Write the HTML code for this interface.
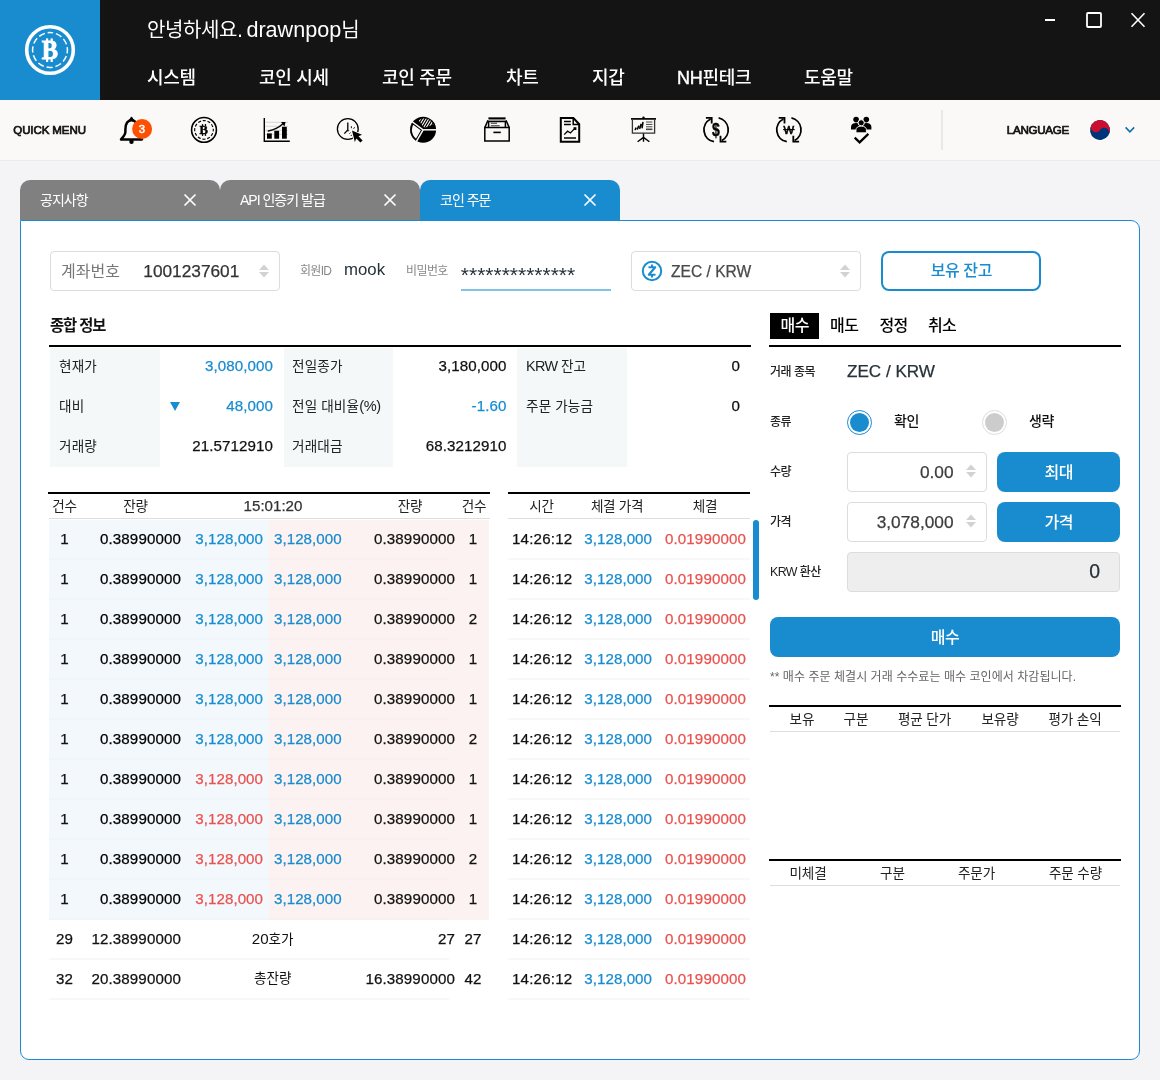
<!DOCTYPE html>
<html lang="ko">
<head>
<meta charset="utf-8">
<title>코인 주문</title>
<style>
*{box-sizing:border-box;margin:0;padding:0}
html,body{width:1160px;height:1080px;overflow:hidden}
body{background:#f4f4f7;font-family:"Liberation Sans","Noto Sans CJK KR",sans-serif;font-size:14px;color:#111;position:relative}
#app{position:absolute;left:0;top:0;width:1160px;height:1080px;will-change:transform}
.b{position:absolute}
.t{position:absolute;white-space:nowrap}
svg{position:absolute;overflow:visible}
#hdr{left:0;top:0;width:1160px;height:100px;background:#141414}
#logo{left:0;top:0;width:100px;height:100px;background:#198ccf}
#quick{left:0;top:100px;width:1160px;height:61px;background:#faf9f8;border-bottom:1px solid #ebebee}
.tab{position:absolute;top:180px;width:200px;height:40px;background:#808080;border-radius:10px 10px 0 0}
.tab.on{background:#198ccf}
#panel{left:20px;top:220px;width:1120px;height:840px;background:#fff;border:1px solid #198ccf;border-radius:0 9px 9px 9px}
.box{position:absolute;border:1px solid #dcdcdc;border-radius:4px;background:#fff}
.btn{position:absolute;background:#198ccf;border-radius:8px}
</style>
</head>
<body>
<div id="app">

<div class="b" id="hdr"></div><div class="b" id="logo"></div>
<svg style="left:0;top:0" width="100" height="100" viewBox="0 0 100 100"><circle cx="50" cy="50" r="23.3" fill="none" stroke="#fff" stroke-width="3.6"/><circle cx="50" cy="50" r="17.4" fill="none" stroke="#fff" stroke-width="1.5" stroke-dasharray="6.3 2.81" stroke-dashoffset="3.1" transform="rotate(-90 50 50)"/><g fill="#fff"><rect x="46" y="38.4" width="2.2" height="4"/><rect x="50.6" y="38.4" width="2.2" height="4"/><rect x="46" y="58" width="2.2" height="4"/><rect x="50.6" y="58" width="2.2" height="4"/></g><text x="49.8" y="59" text-anchor="middle" font-family="'Liberation Serif',serif" font-weight="700" font-size="26.5" fill="#fff" stroke="#fff" stroke-width="0.9" transform="translate(49.8 0) scale(0.92 1) translate(-49.8 0)">B</text></svg>
<div class="t" style="left:147px;top:17.2px;font-size:21.6px;line-height:26px;color:#fff"><span style="font-size:20px;letter-spacing:-0.4px">안녕하세요</span><span style="letter-spacing:-1.3px">. </span>drawnpop<span style="font-size:20px">님</span></div>
<div class="t" style="top:66px;font-size:18px;line-height:24px;color:#fff;font-weight:500;letter-spacing:-0.3px;left:147px;">시스템</div>
<div class="t" style="top:66px;font-size:18px;line-height:24px;color:#fff;font-weight:500;letter-spacing:-0.3px;left:259px;">코인 시세</div>
<div class="t" style="top:66px;font-size:18px;line-height:24px;color:#fff;font-weight:500;letter-spacing:-0.3px;left:382px;">코인 주문</div>
<div class="t" style="top:66px;font-size:18px;line-height:24px;color:#fff;font-weight:500;letter-spacing:-0.3px;left:506px;">차트</div>
<div class="t" style="top:66px;font-size:18px;line-height:24px;color:#fff;font-weight:500;letter-spacing:-0.3px;left:592px;">지갑</div>
<div class="t" style="top:66px;left:677px;font-size:18px;line-height:24px;color:#fff;font-weight:500;letter-spacing:-0.3px"><span style="-webkit-text-stroke:0.45px">NH</span>핀테크</div>
<div class="t" style="top:66px;font-size:18px;line-height:24px;color:#fff;font-weight:500;letter-spacing:-0.3px;left:804px;">도움말</div>
<svg style="left:1040px;top:10px" width="110" height="22" viewBox="0 0 110 22"><path d="M5 10H15" stroke="#fff" stroke-width="2" fill="none"/><rect x="47" y="3" width="14" height="14" rx="1" stroke="#fff" stroke-width="1.8" fill="none"/><path d="M91.5 3.3L104.5 16.7M104.5 3.3L91.5 16.7" stroke="#fff" stroke-width="1.6" fill="none"/></svg>
<div class="b" id="quick"></div>
<div class="t" style="top:121.3px;font-size:11.52px;line-height:18px;color:#111;letter-spacing:-0.1px;left:13.3px;-webkit-text-stroke:0.25px;-webkit-text-stroke:0.7px;">QUICK MENU</div>
<svg style="left:0;top:100px" width="1160" height="60" viewBox="0 100 1160 60"><g fill="none" stroke="#000" stroke-width="2.5" stroke-linejoin="round" stroke-linecap="round"><path d="M125.4 129.5C125.4 123.4 127.8 120.2 131.5 120.2C135.2 120.2 137.6 123.4 137.6 129.5V131.5C137.6 135 139.6 136.8 142 139.4H121C123.4 136.8 125.4 135 125.4 131.5Z"/></g><path d="M129.4 120L131.5 116.9L133.6 120Z" fill="#000" stroke="#000" stroke-width="1" stroke-linejoin="round"/><circle cx="131.5" cy="141.8" r="2.2" fill="#000"/><circle cx="142.1" cy="129" r="10" fill="#ff4f00"/><text x="142" y="133" text-anchor="middle" font-family="'Liberation Sans',sans-serif" font-weight="400" font-size="11.4" fill="#fff" stroke="#fff" stroke-width="0.45">3</text><circle cx="204" cy="129.9" r="12.4" fill="none" stroke="#000" stroke-width="1.6"/><circle cx="204" cy="129.9" r="9.3" fill="none" stroke="#000" stroke-width="1.15" stroke-dasharray="3.1 1.769" stroke-dashoffset="1.55"/><g fill="#000"><rect x="201.9" y="124.1" width="1.3" height="2"/><rect x="204.8" y="124.1" width="1.3" height="2"/><rect x="201.9" y="134" width="1.3" height="1.9"/><rect x="204.8" y="134" width="1.3" height="1.9"/></g><text x="0" y="0" text-anchor="middle" font-family="'Liberation Serif',serif" font-weight="700" font-size="12.4" fill="#000" stroke="#000" stroke-width="0.4" transform="translate(203.8 134.3) scale(1.02 1)">B</text><path d="M265 122.3H288M265 126.3H288M265 130.3H288M265 134.3H288" stroke="#c8c8c8" stroke-width="0.7" fill="none"/><path d="M264.3 118V141.2H289.8" stroke="#000" stroke-width="1.4" fill="none"/><g fill="#000"><rect x="267" y="133.4" width="4.8" height="5.3"/><rect x="274.3" y="130.8" width="4.8" height="7.9"/><rect x="282" y="126.8" width="4.8" height="11.9"/></g><path d="M268.3 131C274.5 129.8 279 127.6 283.2 123.6" stroke="#000" stroke-width="1.4" fill="none" stroke-linecap="round"/><path d="M281 122.1L285.6 122.1L284.4 126.4Z" fill="#000"/><circle cx="347.8" cy="129" r="10.4" fill="none" stroke="#000" stroke-width="1.3"/><path d="M347.8 122.6V130L344.3 133.6" stroke="#000" stroke-width="1.3" fill="none"/><path d="M352 130.6L362 134.8L358.5 136.3L362.6 140.4L360.4 142.6L356.3 138.5L354.8 142Z" fill="#faf9f8" stroke="#faf9f8" stroke-width="2" stroke-linejoin="round"/><path d="M352 130.6L362 134.8L358.5 136.3L362.6 140.4L360.4 142.6L356.3 138.5L354.8 142Z" fill="#000"/><path d="M351.4 126.2V128.2M354.6 127.2L353.6 128.8M349.2 130.6L347.6 131M349.4 133.6L350.6 132.6M351 136L351.6 134.8" stroke="#000" stroke-width="0.9" fill="none"/><circle cx="423.1" cy="129.8" r="13" fill="#000"/><clipPath id="cpl"><path d="M423.10 129.80L416.68 141.10A13 13 0 0 1 412.62 122.10Z"/></clipPath><path d="M423.10 129.80L416.68 141.10A13 13 0 0 1 412.62 122.10Z" fill="#faf9f8" stroke="#000" stroke-width="3.6" clip-path="url(#cpl)" stroke-linejoin="miter"/><clipPath id="cpt"><path d="M423.10 129.80L417.23 122.20A9.6 9.6 0 0 1 432.00 126.20Z" transform="translate(1.3 -1.8)"/></clipPath><path d="M412.9 113.80000000000001L400.9 133.8M415.6 113.80000000000001L403.6 133.8M418.3 113.80000000000001L406.3 133.8M421.0 113.80000000000001L409.0 133.8M423.7 113.80000000000001L411.7 133.8M426.4 113.80000000000001L414.4 133.8M429.1 113.80000000000001L417.1 133.8M431.8 113.80000000000001L419.8 133.8M434.5 113.80000000000001L422.5 133.8M437.2 113.80000000000001L425.2 133.8M439.9 113.80000000000001L427.9 133.8M442.6 113.80000000000001L430.6 133.8M445.3 113.80000000000001L433.3 133.8M448.0 113.80000000000001L436.0 133.8" stroke="#faf9f8" stroke-width="1.1" fill="none" clip-path="url(#cpt)"/><path d="M423.1 129.8L411.82 121.51" stroke="#faf9f8" stroke-width="1.5"/><path d="M423.1 129.8L437.10 129.80" stroke="#faf9f8" stroke-width="1.5"/><path d="M423.1 129.8L416.18 141.97" stroke="#faf9f8" stroke-width="1.5"/><g fill="none" stroke="#000" stroke-width="1.5" stroke-linejoin="miter"><path d="M484.8 127.6H509.2V141H484.8Z"/><path d="M484.8 127.6L488 120.2M509.2 127.6L506 120.2"/><path d="M488.6 127V121.6H505.4V127"/><path d="M493.4 132.4H500.8" stroke-width="1.6"/></g><path d="M488.4 118.2H505.6" stroke="#000" stroke-width="1.7" fill="none"/><path d="M488.6 119.8H505.4" stroke="#666" stroke-width="1.2" fill="none"/><path d="M490.8 123.3H497M490.8 125.7H499.6" stroke="#333" stroke-width="1.1" fill="none"/><path d="M560.8 118H573.4L579.2 124.2V141.7H560.8Z" fill="none" stroke="#000" stroke-width="2" stroke-linejoin="miter"/><path d="M573.2 118.4V124.4H579" fill="none" stroke="#000" stroke-width="1.5"/><path d="M564 121.4H570.8M564 124.6H570.8" stroke="#000" stroke-width="1.5" fill="none"/><path d="M564.2 134.6L567.6 131.2L570.4 133L574.6 128.6" stroke="#000" stroke-width="1.3" fill="none"/><rect x="573.6" y="127.2" width="2.8" height="2.8" fill="#000"/><path d="M564 138H576" stroke="#000" stroke-width="1.5" fill="none"/><path d="M631 118.9H656" stroke="#000" stroke-width="1.7" fill="none"/><circle cx="643.5" cy="117.8" r="1.2" fill="#000"/><path d="M632.4 119.6V133.2H654.6V119.6" stroke="#333" stroke-width="1.3" fill="none"/><path d="M635.3 129.5L635.9 128.2M637.5 129L638.6 126.3M639.8 128.3L641 124.4M642.1 127.6L642.9 122.6" stroke="#000" stroke-width="1.6" stroke-linecap="round" fill="none"/><path d="M646 122H652.4M646 124.4H652.4M646 126.8H652.4" stroke="#444" stroke-width="1" fill="none"/><path d="M646 129.3H652.4" stroke="#444" stroke-width="1.6" fill="none"/><path d="M643.5 133.4V141.8M643.5 137.4L637.6 141.8M643.5 137.4L649.4 141.8" stroke="#000" stroke-width="1.4" fill="none"/><path d="M714.00 141.72A12.1 12.1 0 0 1 710.61 119.02" stroke="#000" stroke-width="1.8" fill="none"/><path d="M705.90 117.8H711.70V123.6" stroke="#000" stroke-width="1.8" fill="none"/><path d="M718.62 117.96A12.1 12.1 0 0 1 721.78 140.48" stroke="#000" stroke-width="1.8" fill="none"/><path d="M726.30 141.6H720.50V135.8" stroke="#000" stroke-width="1.8" fill="none"/><text x="0" y="0" text-anchor="middle" font-family="'Liberation Sans',sans-serif" font-weight="700" font-size="17.5" fill="#000" stroke="#000" stroke-width="0.4" transform="translate(715.8 136.2) scale(0.8 1)">$</text><path d="M786.80 141.72A12.1 12.1 0 0 1 783.41 119.02" stroke="#000" stroke-width="1.8" fill="none"/><path d="M778.70 117.8H784.50V123.6" stroke="#000" stroke-width="1.8" fill="none"/><path d="M791.42 117.96A12.1 12.1 0 0 1 794.58 140.48" stroke="#000" stroke-width="1.8" fill="none"/><path d="M799.10 141.6H793.30V135.8" stroke="#000" stroke-width="1.8" fill="none"/><text x="788.7" y="134" text-anchor="middle" font-family="'Liberation Sans',sans-serif" font-weight="400" font-size="11.2" fill="#000" stroke="#000" stroke-width="0.6">W</text><path d="M783.1 129.6H794.7" stroke="#000" stroke-width="1.1" fill="none"/><g fill="#000"><circle cx="856.1" cy="119.6" r="2.8"/><circle cx="866.3" cy="119.6" r="2.8"/><path d="M851 129.6V126.8C851 124.4 853 123 856.1 123C859.2 123 861.2 124.4 861.2 126.8V129.6Z"/><path d="M861.2 129.6V126.8C861.2 124.4 863.2 123 866.3 123C869.4 123 871.4 124.4 871.4 126.8V129.6Z"/></g><circle cx="861.2" cy="122.8" r="3.1" fill="#000" stroke="#faf9f8" stroke-width="1"/><path d="M856 132.8V129.8C856 127.4 858 126.2 861.2 126.2C864.4 126.2 866.4 127.4 866.4 129.8V132.8Z" fill="#000" stroke="#faf9f8" stroke-width="0.9"/><path d="M854.7 137.7L859.6 142.3L868.4 133.9" stroke="#000" stroke-width="2.3" fill="none"/><circle cx="1100" cy="130" r="10.9" fill="#fff"/><g transform="rotate(33.7 1100 130)"><circle cx="1100" cy="130" r="10" fill="#003478"/><path d="M1090 130A10 10 0 0 1 1110 130A5.0 5.0 0 0 0 1100 130A5.0 5.0 0 0 1 1090 130Z" fill="#cb0d2f"/></g><path d="M1125.6 127.4L1129.9 131.8L1134.2 127.4" stroke="#1272ad" stroke-width="1.6" fill="none"/></svg>
<div class="b" style="left:941px;top:110px;width:1.5px;height:40px;background:#e8e8eb;"></div>
<div class="t" style="top:121.3px;font-size:11.64px;line-height:18px;color:#111;letter-spacing:-0.3px;left:1006.8px;-webkit-text-stroke:0.25px;-webkit-text-stroke:0.7px;">LANGUAGE</div>
<div class="tab" style="left:20px"></div>
<div class="t" style="top:189.7px;font-size:14px;line-height:20px;color:#fff;letter-spacing:-1px;left:40px;">공지사항</div>
<div class="b" style="left:183px;top:193px;width:14px;height:14px"><svg width="14" height="14" viewBox="0 0 14 14"><path d="M1.5 1.5L12.5 12.5M12.5 1.5L1.5 12.5" stroke="#fff" stroke-width="1.7" fill="none"/></svg></div>
<div class="tab" style="left:220px"></div>
<div class="t" style="top:189.7px;font-size:14px;line-height:20px;color:#fff;letter-spacing:-1px;left:240px;">API <span style="font-size:14px;">인증키 발급</span></div>
<div class="b" style="left:383px;top:193px;width:14px;height:14px"><svg width="14" height="14" viewBox="0 0 14 14"><path d="M1.5 1.5L12.5 12.5M12.5 1.5L1.5 12.5" stroke="#fff" stroke-width="1.7" fill="none"/></svg></div>
<div class="tab on" style="left:420px"></div>
<div class="t" style="top:189.7px;font-size:14px;line-height:20px;color:#fff;letter-spacing:-1px;left:440px;">코인 주문</div>
<div class="b" style="left:583px;top:193px;width:14px;height:14px"><svg width="14" height="14" viewBox="0 0 14 14"><path d="M1.5 1.5L12.5 12.5M12.5 1.5L1.5 12.5" stroke="#fff" stroke-width="1.7" fill="none"/></svg></div>
<div class="b" id="panel"></div>
<div class="box" style="left:50px;top:251px;width:230px;height:40px"></div>
<div class="t" style="top:261px;font-size:16px;line-height:22px;color:#777;left:61px;">계좌번호</div>
<div class="t" style="top:259.9px;font-size:17.28px;line-height:22px;color:#333;left:143.3px;-webkit-text-stroke:0.25px;">1001237601</div>
<svg style="left:258px;top:264.3px" width="12" height="14" viewBox="0 0 12 14"><path d="M6 0.5L11 6H1Z M6 13.5L1 8H11Z" fill="#d2d2d2"/></svg>
<div class="t" style="top:261.5px;font-size:12px;line-height:18px;color:#888;letter-spacing:-0.7px;left:300px;"><span style="font-size:12px;">회원</span>ID</div>
<div class="t" style="top:258.5px;font-size:16.8px;line-height:22px;color:#263238;left:344px;-webkit-text-stroke:0.25px;-webkit-text-stroke:0;">mook</div>
<div class="t" style="top:261.5px;font-size:12px;line-height:18px;color:#888;letter-spacing:-0.6px;left:406px;">비밀번호</div>
<div class="t" style="top:260.2px;font-size:21px;line-height:30px;color:#263238;left:460.8px;">**************</div>
<div class="b" style="left:460.5px;top:289px;width:150.5px;height:2px;background:#7fc3e9;"></div>
<div class="box" style="left:631px;top:251px;width:230px;height:40px"></div>
<svg style="left:641px;top:260px" width="22" height="22" viewBox="0 0 22 22"><circle cx="11" cy="11" r="9.2" stroke="#198ccf" stroke-width="2" fill="none"/><path d="M7.5 7.2H14.2L7.8 14.8H14.5M11 4.6V7.2M11 14.8V17.4" stroke="#198ccf" stroke-width="2.1" fill="none" stroke-linejoin="round"/></svg>
<div class="t" style="top:261.2px;font-size:15.6px;line-height:22px;color:#4a4a4a;left:671px;-webkit-text-stroke:0.25px;">ZEC / KRW</div>
<svg style="left:839px;top:264.3px" width="12" height="14" viewBox="0 0 12 14"><path d="M6 0.5L11 6H1Z M6 13.5L1 8H11Z" fill="#d2d2d2"/></svg>
<div class="b" style="left:881px;top:251px;width:160px;height:40px;border:2px solid #198ccf;border-radius:8px;background:#fff"></div>
<div class="t" style="top:260.3px;font-size:16px;line-height:22px;color:#198ccf;font-weight:500;letter-spacing:-0.4px;left:861.3px;width:200px;text-align:center;">보유 잔고</div>
<div class="t" style="top:315px;font-size:15.36px;line-height:22px;color:#111;font-weight:700;letter-spacing:-1.1px;left:50px;">종합 정보</div>
<div class="b" style="left:49px;top:345px;width:702px;height:2px;background:#000;"></div>
<div class="b" style="left:50px;top:348px;width:110px;height:119px;background:#f4f8f9;"></div>
<div class="b" style="left:284px;top:348px;width:109px;height:119px;background:#f4f8f9;"></div>
<div class="b" style="left:517px;top:348px;width:110px;height:119px;background:#f4f8f9;"></div>
<div class="t" style="top:356.5px;font-size:13.58px;line-height:20px;color:#222;letter-spacing:0.15px;left:59px;">현재가</div>
<div class="t" style="top:396.5px;font-size:13.58px;line-height:20px;color:#222;letter-spacing:0.15px;left:59px;">대비</div>
<div class="t" style="top:436.5px;font-size:13.58px;line-height:20px;color:#222;letter-spacing:0.15px;left:59px;">거래량</div>
<div class="t" style="top:356.5px;font-size:13.58px;line-height:20px;color:#222;letter-spacing:0.15px;left:292px;">전일종가</div>
<div class="t" style="top:396.1px;font-size:14.56px;line-height:20px;color:#222;letter-spacing:-0.3px;left:292px;"><span style="font-size:13.58px;letter-spacing:0.15px;">전일 대비율</span>(%)</div>
<div class="t" style="top:436.5px;font-size:13.58px;line-height:20px;color:#222;letter-spacing:0.15px;left:292px;">거래대금</div>
<div class="t" style="top:356.1px;font-size:14.42px;line-height:20px;color:#222;letter-spacing:-0.6px;left:526px;">KRW <span style="font-size:13.58px;letter-spacing:0px;">잔고</span></div>
<div class="t" style="top:396.5px;font-size:13.58px;line-height:20px;color:#222;letter-spacing:0.15px;left:526px;">주문 가능금</div>
<div class="t" style="top:355.9px;font-size:15.12px;line-height:20px;color:#198ccf;letter-spacing:0.1px;left:73px;width:200px;text-align:right;-webkit-text-stroke:0.25px;">3,080,000</div>
<div class="t" style="top:395.9px;font-size:15.12px;line-height:20px;color:#198ccf;letter-spacing:0.1px;left:73px;width:200px;text-align:right;-webkit-text-stroke:0.25px;">48,000</div>
<div class="t" style="top:435.9px;font-size:15.12px;line-height:20px;color:#111;letter-spacing:0.1px;left:73px;width:200px;text-align:right;-webkit-text-stroke:0.25px;">21.5712910</div>
<svg style="left:170px;top:402px" width="10" height="9" viewBox="0 0 10 9"><path d="M0 0H10L5 9Z" fill="#198ccf"/></svg>
<div class="t" style="top:355.9px;font-size:15.12px;line-height:20px;color:#111;letter-spacing:0.1px;left:306.5px;width:200px;text-align:right;-webkit-text-stroke:0.25px;">3,180,000</div>
<div class="t" style="top:395.9px;font-size:15.12px;line-height:20px;color:#198ccf;letter-spacing:0.1px;left:306.5px;width:200px;text-align:right;-webkit-text-stroke:0.25px;">-1.60</div>
<div class="t" style="top:435.9px;font-size:15.12px;line-height:20px;color:#111;letter-spacing:0.1px;left:306.5px;width:200px;text-align:right;-webkit-text-stroke:0.25px;">68.3212910</div>
<div class="t" style="top:355.9px;font-size:15.12px;line-height:20px;color:#111;left:540px;width:200px;text-align:right;-webkit-text-stroke:0.25px;">0</div>
<div class="t" style="top:395.9px;font-size:15.12px;line-height:20px;color:#111;left:540px;width:200px;text-align:right;-webkit-text-stroke:0.25px;">0</div>
<div class="b" style="left:48px;top:492px;width:442px;height:2px;background:#000;"></div>
<div class="b" style="left:48.5px;top:518px;width:441.5px;height:1px;background:#dedede;"></div>
<div class="t" style="top:497.2px;font-size:13.58px;line-height:20px;color:#222;letter-spacing:-0.3px;left:-35.5px;width:200px;text-align:center;">건수</div>
<div class="t" style="top:497.2px;font-size:13.58px;line-height:20px;color:#222;letter-spacing:-0.3px;left:35.5px;width:200px;text-align:center;">잔량</div>
<div class="t" style="top:495.7px;font-size:15.12px;line-height:20px;color:#333;left:173px;width:200px;text-align:center;-webkit-text-stroke:0.25px;">15:01:20</div>
<div class="t" style="top:497.2px;font-size:13.58px;line-height:20px;color:#222;letter-spacing:-0.3px;left:310px;width:200px;text-align:center;">잔량</div>
<div class="t" style="top:497.2px;font-size:13.58px;line-height:20px;color:#222;letter-spacing:-0.3px;left:374px;width:200px;text-align:center;">건수</div>
<div class="b" style="left:49px;top:520px;width:220px;height:400px;background:#f3f8fc;"></div>
<div class="b" style="left:269px;top:520px;width:220px;height:400px;background:#fcf2f1;"></div>
<div class="t" style="top:528.7px;font-size:15.12px;line-height:20px;color:#111;left:-35.5px;width:200px;text-align:center;-webkit-text-stroke:0.25px;">1</div>
<div class="t" style="top:528.7px;font-size:15.12px;line-height:20px;color:#000;letter-spacing:0.12px;left:-19px;width:200px;text-align:right;-webkit-text-stroke:0.25px;">0.38990000</div>
<div class="t" style="top:528.7px;font-size:15.12px;line-height:20px;color:#198ccf;letter-spacing:0.05px;left:63px;width:200px;text-align:right;-webkit-text-stroke:0.25px;">3,128,000</div>
<div class="t" style="top:528.7px;font-size:15.12px;line-height:20px;color:#198ccf;letter-spacing:0.05px;left:274px;-webkit-text-stroke:0.25px;">3,128,000</div>
<div class="t" style="top:528.7px;font-size:15.12px;line-height:20px;color:#111;letter-spacing:0.12px;left:255px;width:200px;text-align:right;-webkit-text-stroke:0.25px;">0.38990000</div>
<div class="t" style="top:528.7px;font-size:15.12px;line-height:20px;color:#111;left:373px;width:200px;text-align:center;-webkit-text-stroke:0.25px;">1</div>
<div class="b" style="left:49px;top:558px;width:400px;height:2px;background:rgba(0,0,0,0.013);"></div>
<div class="t" style="top:568.7px;font-size:15.12px;line-height:20px;color:#111;left:-35.5px;width:200px;text-align:center;-webkit-text-stroke:0.25px;">1</div>
<div class="t" style="top:568.7px;font-size:15.12px;line-height:20px;color:#000;letter-spacing:0.12px;left:-19px;width:200px;text-align:right;-webkit-text-stroke:0.25px;">0.38990000</div>
<div class="t" style="top:568.7px;font-size:15.12px;line-height:20px;color:#198ccf;letter-spacing:0.05px;left:63px;width:200px;text-align:right;-webkit-text-stroke:0.25px;">3,128,000</div>
<div class="t" style="top:568.7px;font-size:15.12px;line-height:20px;color:#198ccf;letter-spacing:0.05px;left:274px;-webkit-text-stroke:0.25px;">3,128,000</div>
<div class="t" style="top:568.7px;font-size:15.12px;line-height:20px;color:#111;letter-spacing:0.12px;left:255px;width:200px;text-align:right;-webkit-text-stroke:0.25px;">0.38990000</div>
<div class="t" style="top:568.7px;font-size:15.12px;line-height:20px;color:#111;left:373px;width:200px;text-align:center;-webkit-text-stroke:0.25px;">1</div>
<div class="b" style="left:49px;top:598px;width:400px;height:2px;background:rgba(0,0,0,0.013);"></div>
<div class="t" style="top:608.7px;font-size:15.12px;line-height:20px;color:#111;left:-35.5px;width:200px;text-align:center;-webkit-text-stroke:0.25px;">1</div>
<div class="t" style="top:608.7px;font-size:15.12px;line-height:20px;color:#000;letter-spacing:0.12px;left:-19px;width:200px;text-align:right;-webkit-text-stroke:0.25px;">0.38990000</div>
<div class="t" style="top:608.7px;font-size:15.12px;line-height:20px;color:#198ccf;letter-spacing:0.05px;left:63px;width:200px;text-align:right;-webkit-text-stroke:0.25px;">3,128,000</div>
<div class="t" style="top:608.7px;font-size:15.12px;line-height:20px;color:#198ccf;letter-spacing:0.05px;left:274px;-webkit-text-stroke:0.25px;">3,128,000</div>
<div class="t" style="top:608.7px;font-size:15.12px;line-height:20px;color:#111;letter-spacing:0.12px;left:255px;width:200px;text-align:right;-webkit-text-stroke:0.25px;">0.38990000</div>
<div class="t" style="top:608.7px;font-size:15.12px;line-height:20px;color:#111;left:373px;width:200px;text-align:center;-webkit-text-stroke:0.25px;">2</div>
<div class="b" style="left:49px;top:638px;width:400px;height:2px;background:rgba(0,0,0,0.013);"></div>
<div class="t" style="top:648.7px;font-size:15.12px;line-height:20px;color:#111;left:-35.5px;width:200px;text-align:center;-webkit-text-stroke:0.25px;">1</div>
<div class="t" style="top:648.7px;font-size:15.12px;line-height:20px;color:#000;letter-spacing:0.12px;left:-19px;width:200px;text-align:right;-webkit-text-stroke:0.25px;">0.38990000</div>
<div class="t" style="top:648.7px;font-size:15.12px;line-height:20px;color:#198ccf;letter-spacing:0.05px;left:63px;width:200px;text-align:right;-webkit-text-stroke:0.25px;">3,128,000</div>
<div class="t" style="top:648.7px;font-size:15.12px;line-height:20px;color:#198ccf;letter-spacing:0.05px;left:274px;-webkit-text-stroke:0.25px;">3,128,000</div>
<div class="t" style="top:648.7px;font-size:15.12px;line-height:20px;color:#111;letter-spacing:0.12px;left:255px;width:200px;text-align:right;-webkit-text-stroke:0.25px;">0.38990000</div>
<div class="t" style="top:648.7px;font-size:15.12px;line-height:20px;color:#111;left:373px;width:200px;text-align:center;-webkit-text-stroke:0.25px;">1</div>
<div class="b" style="left:49px;top:678px;width:400px;height:2px;background:rgba(0,0,0,0.013);"></div>
<div class="t" style="top:688.7px;font-size:15.12px;line-height:20px;color:#111;left:-35.5px;width:200px;text-align:center;-webkit-text-stroke:0.25px;">1</div>
<div class="t" style="top:688.7px;font-size:15.12px;line-height:20px;color:#000;letter-spacing:0.12px;left:-19px;width:200px;text-align:right;-webkit-text-stroke:0.25px;">0.38990000</div>
<div class="t" style="top:688.7px;font-size:15.12px;line-height:20px;color:#198ccf;letter-spacing:0.05px;left:63px;width:200px;text-align:right;-webkit-text-stroke:0.25px;">3,128,000</div>
<div class="t" style="top:688.7px;font-size:15.12px;line-height:20px;color:#198ccf;letter-spacing:0.05px;left:274px;-webkit-text-stroke:0.25px;">3,128,000</div>
<div class="t" style="top:688.7px;font-size:15.12px;line-height:20px;color:#111;letter-spacing:0.12px;left:255px;width:200px;text-align:right;-webkit-text-stroke:0.25px;">0.38990000</div>
<div class="t" style="top:688.7px;font-size:15.12px;line-height:20px;color:#111;left:373px;width:200px;text-align:center;-webkit-text-stroke:0.25px;">1</div>
<div class="b" style="left:49px;top:718px;width:400px;height:2px;background:rgba(0,0,0,0.013);"></div>
<div class="t" style="top:728.7px;font-size:15.12px;line-height:20px;color:#111;left:-35.5px;width:200px;text-align:center;-webkit-text-stroke:0.25px;">1</div>
<div class="t" style="top:728.7px;font-size:15.12px;line-height:20px;color:#000;letter-spacing:0.12px;left:-19px;width:200px;text-align:right;-webkit-text-stroke:0.25px;">0.38990000</div>
<div class="t" style="top:728.7px;font-size:15.12px;line-height:20px;color:#198ccf;letter-spacing:0.05px;left:63px;width:200px;text-align:right;-webkit-text-stroke:0.25px;">3,128,000</div>
<div class="t" style="top:728.7px;font-size:15.12px;line-height:20px;color:#198ccf;letter-spacing:0.05px;left:274px;-webkit-text-stroke:0.25px;">3,128,000</div>
<div class="t" style="top:728.7px;font-size:15.12px;line-height:20px;color:#111;letter-spacing:0.12px;left:255px;width:200px;text-align:right;-webkit-text-stroke:0.25px;">0.38990000</div>
<div class="t" style="top:728.7px;font-size:15.12px;line-height:20px;color:#111;left:373px;width:200px;text-align:center;-webkit-text-stroke:0.25px;">2</div>
<div class="b" style="left:49px;top:758px;width:400px;height:2px;background:rgba(0,0,0,0.013);"></div>
<div class="t" style="top:768.7px;font-size:15.12px;line-height:20px;color:#111;left:-35.5px;width:200px;text-align:center;-webkit-text-stroke:0.25px;">1</div>
<div class="t" style="top:768.7px;font-size:15.12px;line-height:20px;color:#000;letter-spacing:0.12px;left:-19px;width:200px;text-align:right;-webkit-text-stroke:0.25px;">0.38990000</div>
<div class="t" style="top:768.7px;font-size:15.12px;line-height:20px;color:#e8534f;letter-spacing:0.05px;left:63px;width:200px;text-align:right;-webkit-text-stroke:0.25px;">3,128,000</div>
<div class="t" style="top:768.7px;font-size:15.12px;line-height:20px;color:#198ccf;letter-spacing:0.05px;left:274px;-webkit-text-stroke:0.25px;">3,128,000</div>
<div class="t" style="top:768.7px;font-size:15.12px;line-height:20px;color:#111;letter-spacing:0.12px;left:255px;width:200px;text-align:right;-webkit-text-stroke:0.25px;">0.38990000</div>
<div class="t" style="top:768.7px;font-size:15.12px;line-height:20px;color:#111;left:373px;width:200px;text-align:center;-webkit-text-stroke:0.25px;">1</div>
<div class="b" style="left:49px;top:798px;width:400px;height:2px;background:rgba(0,0,0,0.013);"></div>
<div class="t" style="top:808.7px;font-size:15.12px;line-height:20px;color:#111;left:-35.5px;width:200px;text-align:center;-webkit-text-stroke:0.25px;">1</div>
<div class="t" style="top:808.7px;font-size:15.12px;line-height:20px;color:#000;letter-spacing:0.12px;left:-19px;width:200px;text-align:right;-webkit-text-stroke:0.25px;">0.38990000</div>
<div class="t" style="top:808.7px;font-size:15.12px;line-height:20px;color:#e8534f;letter-spacing:0.05px;left:63px;width:200px;text-align:right;-webkit-text-stroke:0.25px;">3,128,000</div>
<div class="t" style="top:808.7px;font-size:15.12px;line-height:20px;color:#198ccf;letter-spacing:0.05px;left:274px;-webkit-text-stroke:0.25px;">3,128,000</div>
<div class="t" style="top:808.7px;font-size:15.12px;line-height:20px;color:#111;letter-spacing:0.12px;left:255px;width:200px;text-align:right;-webkit-text-stroke:0.25px;">0.38990000</div>
<div class="t" style="top:808.7px;font-size:15.12px;line-height:20px;color:#111;left:373px;width:200px;text-align:center;-webkit-text-stroke:0.25px;">1</div>
<div class="b" style="left:49px;top:838px;width:400px;height:2px;background:rgba(0,0,0,0.013);"></div>
<div class="t" style="top:848.7px;font-size:15.12px;line-height:20px;color:#111;left:-35.5px;width:200px;text-align:center;-webkit-text-stroke:0.25px;">1</div>
<div class="t" style="top:848.7px;font-size:15.12px;line-height:20px;color:#000;letter-spacing:0.12px;left:-19px;width:200px;text-align:right;-webkit-text-stroke:0.25px;">0.38990000</div>
<div class="t" style="top:848.7px;font-size:15.12px;line-height:20px;color:#e8534f;letter-spacing:0.05px;left:63px;width:200px;text-align:right;-webkit-text-stroke:0.25px;">3,128,000</div>
<div class="t" style="top:848.7px;font-size:15.12px;line-height:20px;color:#198ccf;letter-spacing:0.05px;left:274px;-webkit-text-stroke:0.25px;">3,128,000</div>
<div class="t" style="top:848.7px;font-size:15.12px;line-height:20px;color:#111;letter-spacing:0.12px;left:255px;width:200px;text-align:right;-webkit-text-stroke:0.25px;">0.38990000</div>
<div class="t" style="top:848.7px;font-size:15.12px;line-height:20px;color:#111;left:373px;width:200px;text-align:center;-webkit-text-stroke:0.25px;">2</div>
<div class="b" style="left:49px;top:878px;width:400px;height:2px;background:rgba(0,0,0,0.013);"></div>
<div class="t" style="top:888.7px;font-size:15.12px;line-height:20px;color:#111;left:-35.5px;width:200px;text-align:center;-webkit-text-stroke:0.25px;">1</div>
<div class="t" style="top:888.7px;font-size:15.12px;line-height:20px;color:#000;letter-spacing:0.12px;left:-19px;width:200px;text-align:right;-webkit-text-stroke:0.25px;">0.38990000</div>
<div class="t" style="top:888.7px;font-size:15.12px;line-height:20px;color:#e8534f;letter-spacing:0.05px;left:63px;width:200px;text-align:right;-webkit-text-stroke:0.25px;">3,128,000</div>
<div class="t" style="top:888.7px;font-size:15.12px;line-height:20px;color:#198ccf;letter-spacing:0.05px;left:274px;-webkit-text-stroke:0.25px;">3,128,000</div>
<div class="t" style="top:888.7px;font-size:15.12px;line-height:20px;color:#111;letter-spacing:0.12px;left:255px;width:200px;text-align:right;-webkit-text-stroke:0.25px;">0.38990000</div>
<div class="t" style="top:888.7px;font-size:15.12px;line-height:20px;color:#111;left:373px;width:200px;text-align:center;-webkit-text-stroke:0.25px;">1</div>
<div class="b" style="left:49px;top:918px;width:400px;height:2px;background:rgba(0,0,0,0.013);"></div>
<div class="t" style="top:928.7px;font-size:15.12px;line-height:20px;color:#111;left:-35.5px;width:200px;text-align:center;-webkit-text-stroke:0.25px;">29</div>
<div class="t" style="top:928.7px;font-size:15.12px;line-height:20px;color:#111;letter-spacing:0.12px;left:-19px;width:200px;text-align:right;-webkit-text-stroke:0.25px;">12.38990000</div>
<div class="t" style="top:929.2px;font-size:15.12px;line-height:20px;color:#111;left:172.7px;width:200px;text-align:center;">20<span style="font-size:13.58px;">호가</span></div>
<div class="t" style="top:928.7px;font-size:15.12px;line-height:20px;color:#111;letter-spacing:0.12px;left:255px;width:200px;text-align:right;-webkit-text-stroke:0.25px;">27</div>
<div class="t" style="top:928.7px;font-size:15.12px;line-height:20px;color:#111;left:373px;width:200px;text-align:center;-webkit-text-stroke:0.25px;">27</div>
<div class="b" style="left:49px;top:958px;width:400px;height:2px;background:#f8f8f8;"></div>
<div class="t" style="top:968.7px;font-size:15.12px;line-height:20px;color:#111;left:-35.5px;width:200px;text-align:center;-webkit-text-stroke:0.25px;">32</div>
<div class="t" style="top:968.7px;font-size:15.12px;line-height:20px;color:#111;letter-spacing:0.12px;left:-19px;width:200px;text-align:right;-webkit-text-stroke:0.25px;">20.38990000</div>
<div class="t" style="top:969.2px;font-size:13.58px;line-height:20px;color:#111;left:172.7px;width:200px;text-align:center;">총잔량</div>
<div class="t" style="top:968.7px;font-size:15.12px;line-height:20px;color:#111;letter-spacing:0.12px;left:255px;width:200px;text-align:right;-webkit-text-stroke:0.25px;">16.38990000</div>
<div class="t" style="top:968.7px;font-size:15.12px;line-height:20px;color:#111;left:373px;width:200px;text-align:center;-webkit-text-stroke:0.25px;">42</div>
<div class="b" style="left:49px;top:998px;width:400px;height:2px;background:#f8f8f8;"></div>
<div class="b" style="left:508px;top:492px;width:242px;height:2px;background:#000;"></div>
<div class="b" style="left:508px;top:518px;width:242px;height:1px;background:#dedede;"></div>
<div class="t" style="top:497.2px;font-size:13.58px;line-height:20px;color:#222;letter-spacing:-0.3px;left:441.5px;width:200px;text-align:center;">시간</div>
<div class="t" style="top:497.2px;font-size:13.58px;line-height:20px;color:#222;letter-spacing:-0.3px;left:517px;width:200px;text-align:center;">체결 가격</div>
<div class="t" style="top:497.2px;font-size:13.58px;line-height:20px;color:#222;letter-spacing:-0.3px;left:605px;width:200px;text-align:center;">체결</div>
<div class="t" style="top:528.7px;font-size:15.12px;line-height:20px;color:#111;letter-spacing:0.2px;left:512px;-webkit-text-stroke:0.25px;">14:26:12</div>
<div class="t" style="top:528.7px;font-size:15.12px;line-height:20px;color:#198ccf;letter-spacing:0.05px;left:452px;width:200px;text-align:right;-webkit-text-stroke:0.25px;">3,128,000</div>
<div class="t" style="top:528.7px;font-size:15.12px;line-height:20px;color:#e8534f;letter-spacing:0.12px;left:546px;width:200px;text-align:right;-webkit-text-stroke:0.25px;">0.01990000</div>
<div class="b" style="left:508px;top:558px;width:242px;height:2px;background:#f8f8f8;"></div>
<div class="t" style="top:568.7px;font-size:15.12px;line-height:20px;color:#111;letter-spacing:0.2px;left:512px;-webkit-text-stroke:0.25px;">14:26:12</div>
<div class="t" style="top:568.7px;font-size:15.12px;line-height:20px;color:#198ccf;letter-spacing:0.05px;left:452px;width:200px;text-align:right;-webkit-text-stroke:0.25px;">3,128,000</div>
<div class="t" style="top:568.7px;font-size:15.12px;line-height:20px;color:#e8534f;letter-spacing:0.12px;left:546px;width:200px;text-align:right;-webkit-text-stroke:0.25px;">0.01990000</div>
<div class="b" style="left:508px;top:598px;width:242px;height:2px;background:#f8f8f8;"></div>
<div class="t" style="top:608.7px;font-size:15.12px;line-height:20px;color:#111;letter-spacing:0.2px;left:512px;-webkit-text-stroke:0.25px;">14:26:12</div>
<div class="t" style="top:608.7px;font-size:15.12px;line-height:20px;color:#198ccf;letter-spacing:0.05px;left:452px;width:200px;text-align:right;-webkit-text-stroke:0.25px;">3,128,000</div>
<div class="t" style="top:608.7px;font-size:15.12px;line-height:20px;color:#e8534f;letter-spacing:0.12px;left:546px;width:200px;text-align:right;-webkit-text-stroke:0.25px;">0.01990000</div>
<div class="b" style="left:508px;top:638px;width:242px;height:2px;background:#f8f8f8;"></div>
<div class="t" style="top:648.7px;font-size:15.12px;line-height:20px;color:#111;letter-spacing:0.2px;left:512px;-webkit-text-stroke:0.25px;">14:26:12</div>
<div class="t" style="top:648.7px;font-size:15.12px;line-height:20px;color:#198ccf;letter-spacing:0.05px;left:452px;width:200px;text-align:right;-webkit-text-stroke:0.25px;">3,128,000</div>
<div class="t" style="top:648.7px;font-size:15.12px;line-height:20px;color:#e8534f;letter-spacing:0.12px;left:546px;width:200px;text-align:right;-webkit-text-stroke:0.25px;">0.01990000</div>
<div class="b" style="left:508px;top:678px;width:242px;height:2px;background:#f8f8f8;"></div>
<div class="t" style="top:688.7px;font-size:15.12px;line-height:20px;color:#111;letter-spacing:0.2px;left:512px;-webkit-text-stroke:0.25px;">14:26:12</div>
<div class="t" style="top:688.7px;font-size:15.12px;line-height:20px;color:#198ccf;letter-spacing:0.05px;left:452px;width:200px;text-align:right;-webkit-text-stroke:0.25px;">3,128,000</div>
<div class="t" style="top:688.7px;font-size:15.12px;line-height:20px;color:#e8534f;letter-spacing:0.12px;left:546px;width:200px;text-align:right;-webkit-text-stroke:0.25px;">0.01990000</div>
<div class="b" style="left:508px;top:718px;width:242px;height:2px;background:#f8f8f8;"></div>
<div class="t" style="top:728.7px;font-size:15.12px;line-height:20px;color:#111;letter-spacing:0.2px;left:512px;-webkit-text-stroke:0.25px;">14:26:12</div>
<div class="t" style="top:728.7px;font-size:15.12px;line-height:20px;color:#198ccf;letter-spacing:0.05px;left:452px;width:200px;text-align:right;-webkit-text-stroke:0.25px;">3,128,000</div>
<div class="t" style="top:728.7px;font-size:15.12px;line-height:20px;color:#e8534f;letter-spacing:0.12px;left:546px;width:200px;text-align:right;-webkit-text-stroke:0.25px;">0.01990000</div>
<div class="b" style="left:508px;top:758px;width:242px;height:2px;background:#f8f8f8;"></div>
<div class="t" style="top:768.7px;font-size:15.12px;line-height:20px;color:#111;letter-spacing:0.2px;left:512px;-webkit-text-stroke:0.25px;">14:26:12</div>
<div class="t" style="top:768.7px;font-size:15.12px;line-height:20px;color:#198ccf;letter-spacing:0.05px;left:452px;width:200px;text-align:right;-webkit-text-stroke:0.25px;">3,128,000</div>
<div class="t" style="top:768.7px;font-size:15.12px;line-height:20px;color:#e8534f;letter-spacing:0.12px;left:546px;width:200px;text-align:right;-webkit-text-stroke:0.25px;">0.01990000</div>
<div class="b" style="left:508px;top:798px;width:242px;height:2px;background:#f8f8f8;"></div>
<div class="t" style="top:808.7px;font-size:15.12px;line-height:20px;color:#111;letter-spacing:0.2px;left:512px;-webkit-text-stroke:0.25px;">14:26:12</div>
<div class="t" style="top:808.7px;font-size:15.12px;line-height:20px;color:#198ccf;letter-spacing:0.05px;left:452px;width:200px;text-align:right;-webkit-text-stroke:0.25px;">3,128,000</div>
<div class="t" style="top:808.7px;font-size:15.12px;line-height:20px;color:#e8534f;letter-spacing:0.12px;left:546px;width:200px;text-align:right;-webkit-text-stroke:0.25px;">0.01990000</div>
<div class="b" style="left:508px;top:838px;width:242px;height:2px;background:#f8f8f8;"></div>
<div class="t" style="top:848.7px;font-size:15.12px;line-height:20px;color:#111;letter-spacing:0.2px;left:512px;-webkit-text-stroke:0.25px;">14:26:12</div>
<div class="t" style="top:848.7px;font-size:15.12px;line-height:20px;color:#198ccf;letter-spacing:0.05px;left:452px;width:200px;text-align:right;-webkit-text-stroke:0.25px;">3,128,000</div>
<div class="t" style="top:848.7px;font-size:15.12px;line-height:20px;color:#e8534f;letter-spacing:0.12px;left:546px;width:200px;text-align:right;-webkit-text-stroke:0.25px;">0.01990000</div>
<div class="b" style="left:508px;top:878px;width:242px;height:2px;background:#f8f8f8;"></div>
<div class="t" style="top:888.7px;font-size:15.12px;line-height:20px;color:#111;letter-spacing:0.2px;left:512px;-webkit-text-stroke:0.25px;">14:26:12</div>
<div class="t" style="top:888.7px;font-size:15.12px;line-height:20px;color:#198ccf;letter-spacing:0.05px;left:452px;width:200px;text-align:right;-webkit-text-stroke:0.25px;">3,128,000</div>
<div class="t" style="top:888.7px;font-size:15.12px;line-height:20px;color:#e8534f;letter-spacing:0.12px;left:546px;width:200px;text-align:right;-webkit-text-stroke:0.25px;">0.01990000</div>
<div class="b" style="left:508px;top:918px;width:242px;height:2px;background:#f8f8f8;"></div>
<div class="t" style="top:928.7px;font-size:15.12px;line-height:20px;color:#111;letter-spacing:0.2px;left:512px;-webkit-text-stroke:0.25px;">14:26:12</div>
<div class="t" style="top:928.7px;font-size:15.12px;line-height:20px;color:#198ccf;letter-spacing:0.05px;left:452px;width:200px;text-align:right;-webkit-text-stroke:0.25px;">3,128,000</div>
<div class="t" style="top:928.7px;font-size:15.12px;line-height:20px;color:#e8534f;letter-spacing:0.12px;left:546px;width:200px;text-align:right;-webkit-text-stroke:0.25px;">0.01990000</div>
<div class="b" style="left:508px;top:958px;width:242px;height:2px;background:#f8f8f8;"></div>
<div class="t" style="top:968.7px;font-size:15.12px;line-height:20px;color:#111;letter-spacing:0.2px;left:512px;-webkit-text-stroke:0.25px;">14:26:12</div>
<div class="t" style="top:968.7px;font-size:15.12px;line-height:20px;color:#198ccf;letter-spacing:0.05px;left:452px;width:200px;text-align:right;-webkit-text-stroke:0.25px;">3,128,000</div>
<div class="t" style="top:968.7px;font-size:15.12px;line-height:20px;color:#e8534f;letter-spacing:0.12px;left:546px;width:200px;text-align:right;-webkit-text-stroke:0.25px;">0.01990000</div>
<div class="b" style="left:508px;top:998px;width:242px;height:2px;background:#f8f8f8;"></div>
<div class="b" style="left:753px;top:520px;width:6px;height:80px;background:#198ccf;border-radius:3px"></div>
<div class="b" style="left:770px;top:313px;width:49px;height:26px;background:#000;"></div>
<div class="t" style="top:314.8px;font-size:16px;line-height:22px;color:#fff;font-weight:500;letter-spacing:-0.5px;left:694.7px;width:200px;text-align:center;">매수</div>
<div class="t" style="top:314.8px;font-size:16px;line-height:22px;color:#000;font-weight:500;letter-spacing:-0.5px;left:830px;">매도</div>
<div class="t" style="top:314.8px;font-size:16px;line-height:22px;color:#000;font-weight:500;letter-spacing:-0.8px;left:879.5px;">정정</div>
<div class="t" style="top:314.8px;font-size:16px;line-height:22px;color:#000;font-weight:500;letter-spacing:-0.8px;left:928px;">취소</div>
<div class="b" style="left:769px;top:345px;width:352px;height:2px;background:#000;"></div>
<div class="t" style="top:363px;font-size:12px;line-height:18px;color:#222;font-weight:500;letter-spacing:-0.5px;left:770px;">거래 종목</div>
<div class="t" style="top:360px;font-size:17.1px;line-height:24px;color:#263238;left:847px;-webkit-text-stroke:0.25px;">ZEC / KRW</div>
<div class="t" style="top:413px;font-size:12px;line-height:18px;color:#222;font-weight:500;letter-spacing:-0.5px;left:770px;">종류</div>
<div class="b" style="left:846.7px;top:409.8px;width:25px;height:25px;border:1px solid #198ccf;border-radius:50%;background:#fff"></div>
<div class="b" style="left:849.7px;top:412.8px;width:19px;height:19px;border-radius:50%;background:#198ccf"></div>
<div class="t" style="top:410.5px;font-size:14px;line-height:20px;color:#111;font-weight:500;letter-spacing:-0.5px;left:894px;">확인</div>
<div class="b" style="left:981.7px;top:409.8px;width:25px;height:25px;border:1px solid #ddd;border-radius:50%;background:#fff"></div>
<div class="b" style="left:984.7px;top:412.8px;width:19px;height:19px;border-radius:50%;background:#ccc"></div>
<div class="t" style="top:410.5px;font-size:14px;line-height:20px;color:#111;font-weight:500;letter-spacing:-0.5px;left:1029px;">생략</div>
<div class="t" style="top:463px;font-size:12px;line-height:18px;color:#222;font-weight:500;letter-spacing:-0.5px;left:770px;">수량</div>
<div class="box" style="left:847px;top:452px;width:140px;height:40px"></div>
<div class="t" style="top:461px;font-size:17.28px;line-height:22px;color:#3c3c3c;left:753.5px;width:200px;text-align:right;-webkit-text-stroke:0.25px;">0.00</div>
<svg style="left:965px;top:464.3px" width="12" height="14" viewBox="0 0 12 14"><path d="M6 0.5L11 6H1Z M6 13.5L1 8H11Z" fill="#d2d2d2"/></svg>
<div class="btn" style="left:997px;top:452px;width:123px;height:40px"></div>
<div class="t" style="top:461.6px;font-size:16px;line-height:22px;color:#fff;font-weight:500;letter-spacing:-0.5px;left:958.8px;width:200px;text-align:center;">최대</div>
<div class="t" style="top:513px;font-size:12px;line-height:18px;color:#222;font-weight:500;letter-spacing:-0.5px;left:770px;">가격</div>
<div class="box" style="left:847px;top:502px;width:140px;height:40px"></div>
<div class="t" style="top:511px;font-size:17.28px;line-height:22px;color:#3c3c3c;left:753.5px;width:200px;text-align:right;-webkit-text-stroke:0.25px;">3,078,000</div>
<svg style="left:965px;top:514.3px" width="12" height="14" viewBox="0 0 12 14"><path d="M6 0.5L11 6H1Z M6 13.5L1 8H11Z" fill="#d2d2d2"/></svg>
<div class="btn" style="left:997px;top:502px;width:123px;height:40px"></div>
<div class="t" style="top:511.6px;font-size:16px;line-height:22px;color:#fff;font-weight:500;letter-spacing:-0.5px;left:958.8px;width:200px;text-align:center;">가격</div>
<div class="t" style="top:562.7px;font-size:12.36px;line-height:18px;color:#222;font-weight:500;letter-spacing:-0.6px;left:770px;">KRW <span style="font-size:12px;letter-spacing:-0.5px;">환산</span></div>
<div class="box" style="left:847px;top:552px;width:273px;height:40px;background:#eee"></div>
<div class="t" style="top:558.7px;font-size:19.44px;line-height:24px;color:#263238;left:900px;width:200px;text-align:right;-webkit-text-stroke:0.25px;">0</div>
<div class="btn" style="left:770px;top:617px;width:350px;height:40px"></div>
<div class="t" style="top:626.8px;font-size:16px;line-height:22px;color:#fff;font-weight:500;letter-spacing:-0.5px;left:845px;width:200px;text-align:center;">매수</div>
<div class="t" style="top:667.5px;font-size:12px;line-height:18px;color:#666;letter-spacing:0.05px;left:770px;">** <span style="font-size:12px;">매수 주문 체결시 거래 수수료는 매수 코인에서 차감됩니다</span>.</div>
<div class="b" style="left:769px;top:705px;width:352px;height:2px;background:#000;"></div>
<div class="b" style="left:770px;top:731px;width:350px;height:1px;background:#dedede;"></div>
<div class="t" style="top:709.9px;font-size:13.58px;line-height:20px;color:#222;letter-spacing:-0.1px;left:702px;width:200px;text-align:center;">보유</div>
<div class="t" style="top:709.9px;font-size:13.58px;line-height:20px;color:#222;letter-spacing:-0.1px;left:756px;width:200px;text-align:center;">구분</div>
<div class="t" style="top:709.9px;font-size:13.58px;line-height:20px;color:#222;letter-spacing:-0.1px;left:824.5px;width:200px;text-align:center;">평균 단가</div>
<div class="t" style="top:709.9px;font-size:13.58px;line-height:20px;color:#222;letter-spacing:-0.1px;left:900px;width:200px;text-align:center;">보유량</div>
<div class="t" style="top:709.9px;font-size:13.58px;line-height:20px;color:#222;letter-spacing:-0.1px;left:975px;width:200px;text-align:center;">평가 손익</div>
<div class="b" style="left:769px;top:859px;width:352px;height:2px;background:#000;"></div>
<div class="b" style="left:770px;top:885px;width:350px;height:1px;background:#dedede;"></div>
<div class="t" style="top:863.9px;font-size:13.58px;line-height:20px;color:#222;letter-spacing:-0.1px;left:708px;width:200px;text-align:center;">미체결</div>
<div class="t" style="top:863.9px;font-size:13.58px;line-height:20px;color:#222;letter-spacing:-0.1px;left:792.5px;width:200px;text-align:center;">구분</div>
<div class="t" style="top:863.9px;font-size:13.58px;line-height:20px;color:#222;letter-spacing:-0.1px;left:876.5px;width:200px;text-align:center;">주문가</div>
<div class="t" style="top:863.9px;font-size:13.58px;line-height:20px;color:#222;letter-spacing:-0.1px;left:975.5px;width:200px;text-align:center;">주문 수량</div>
</div>
</body>
</html>
